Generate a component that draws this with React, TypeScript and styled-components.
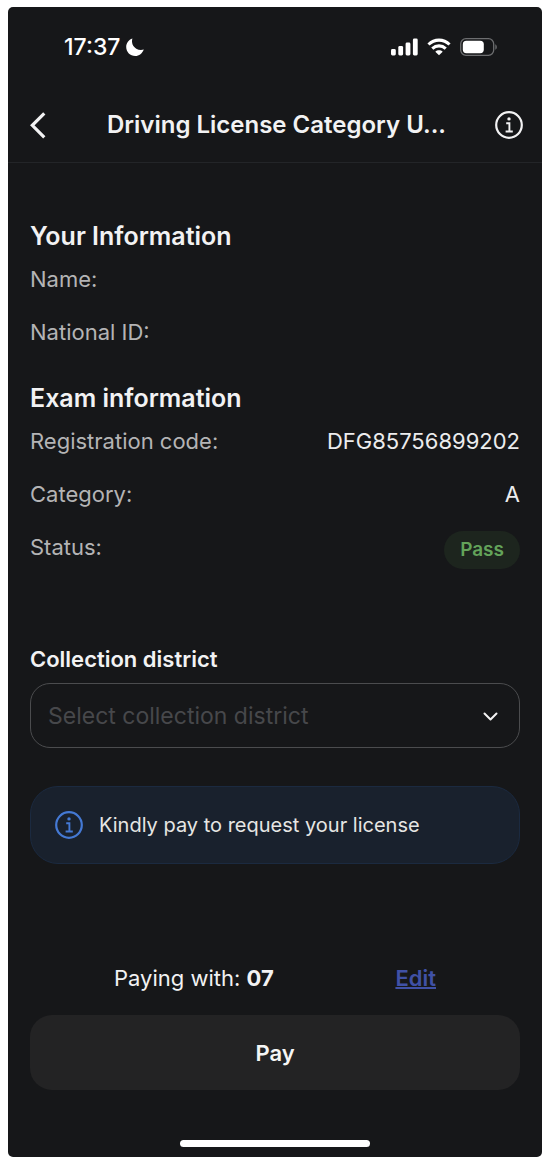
import React from 'react';
import styled, { createGlobalStyle } from 'styled-components';

const GlobalStyle = createGlobalStyle`
  *, *::before, *::after { box-sizing: border-box; }
  body {
    margin: 0;
    background: #ffffff;
    font-family: Inter, 'Liberation Sans', sans-serif;
    -webkit-font-smoothing: antialiased;
  }
  h1, h2, p, dl, dt, dd { margin: 0; }
`;

const Frame = styled.div`
  min-height: 100vh;
  padding: 7px 6px 7px 8px;
  display: flex;
`;

const Screen = styled.div`
  flex: 1;
  min-width: 0;
  display: flex;
  flex-direction: column;
  background: #161719;
  color: #f2f2f3;
  border-radius: 5px;
  overflow: hidden;
`;

const StatusBar = styled.div`
  display: flex;
  align-items: center;
  justify-content: space-between;
  height: 80px;
  padding: 0 44px 0 56px;
`;

const Clock = styled.div`
  display: flex;
  align-items: center;
  gap: 6px;
  font-size: 23px;
  font-weight: 500;
  color: #ffffff;
`;

const Indicators = styled.div`
  display: flex;
  align-items: center;
  gap: 9px;
`;

const Header = styled.header`
  display: flex;
  align-items: center;
  justify-content: space-between;
  height: 76px;
  padding: 0 19px 0 22px;
  border-bottom: 1px solid #232528;
`;

const Title = styled.h1`
  font-size: 24px;
  line-height: 32px;
  font-weight: 600;
  white-space: nowrap;
`;

const IconButton = styled.button`
  display: flex;
  width: 28px;
  padding: 0;
  border: 0;
  background: none;
  color: #f2f2f3;
  cursor: pointer;
`;

const Content = styled.main`
  flex: 1;
  display: flex;
  flex-direction: column;
  padding: 58px 22px 24px;
`;

const Section = styled.section`
  & + & { margin-top: 24px; }
`;

const SectionTitle = styled.h2`
  margin-bottom: 2px;
  font-size: 25px;
  line-height: 30px;
  font-weight: 600;
`;

const Row = styled.div`
  display: flex;
  justify-content: space-between;
  align-items: flex-start;
  min-height: 53px;
  padding-top: 10px;
  font-size: 22px;
  line-height: 32px;
`;

const Term = styled.dt`
  color: #b4b4b5;
`;

const Value = styled.dd`
  color: #ececed;
`;

const Badge = styled.span`
  display: block;
  padding: 0 16px;
  border-radius: 19px;
  background: #1d251e;
  color: #63a35a;
  font-size: 19px;
  line-height: 38px;
  font-weight: 600;
`;

const Field = styled.div`
  display: flex;
  flex-direction: column;
  gap: 12px;
  margin-top: 73px;
`;

const FieldLabel = styled.label`
  font-size: 22px;
  line-height: 24px;
  font-weight: 600;
`;

const SelectBox = styled.div`
  position: relative;
  display: flex;
`;

const Select = styled.select`
  flex: 1;
  min-width: 0;
  height: 65px;
  padding: 0 56px 0 17px;
  appearance: none;
  border: 1px solid #4b4c4e;
  border-radius: 20px;
  background: transparent;
  color: #47484b;
  font-family: inherit;
  font-size: 23px;
`;

const SelectArrow = styled.svg`
  position: absolute;
  right: 22px;
  top: 29px;
  pointer-events: none;
`;

const Notice = styled.div`
  display: flex;
  align-items: center;
  gap: 16px;
  height: 78px;
  margin-top: 38px;
  padding: 0 24px;
  border: 1px solid #1b2a40;
  border-radius: 28px;
  background: #19212d;
  color: #e6e6e4;
  font-size: 20px;
  line-height: 24px;
`;

const NoticeIcon = styled.span`
  display: flex;
  color: #4479d4;
`;

const Footer = styled.footer`
  display: flex;
  flex-direction: column;
  padding: 0 22px 50px;
`;

const Payer = styled.div`
  display: flex;
  justify-content: space-between;
  padding: 0 84px;
  margin-bottom: 25px;
  font-size: 22px;
  line-height: 24px;
`;

const EditLink = styled.a`
  color: #4051a6;
  font-weight: 600;
  text-decoration: underline;
  text-decoration-thickness: 2px;
`;

const PayButton = styled.button`
  height: 75px;
  border: 0;
  border-radius: 22px;
  background: #232324;
  color: #f5f5f5;
  font-family: inherit;
  font-size: 22px;
  font-weight: 600;
  cursor: pointer;
`;

const HomeIndicator = styled.div`
  align-self: center;
  width: 190px;
  height: 7px;
  margin-bottom: 10px;
  border-radius: 4px;
  background: #ffffff;
`;

const InfoIcon = () => (
  <svg width="28" height="28" viewBox="0 0 28 28" fill="none" stroke="currentColor" strokeWidth="2.2" aria-hidden="true">
    <circle cx="14" cy="14" r="12.8" />
    <path d="M11.2 12.3h3.2v7.9M10.6 20.5h7.2" strokeWidth="1.9" />
    <circle cx="14" cy="7.9" r="1.7" fill="currentColor" stroke="none" />
  </svg>
);

const MoonIcon = () => (
  <svg width="18" height="18" viewBox="0 0 18 18" fill="#fff" aria-hidden="true">
    <path d="M6.4 0.5C5.2 4.600 6.900 8.700 10.300 10.700C12.600 12 15.300 12.200 17.800 11.500C16.500 15.300 13.100 18 9.200 18C4.200 18 0.200 14 0.200 9C0.200 5.100 2.700 1.800 6.400 0.500Z" />
  </svg>
);

const SignalIcon = () => (
  <svg width="27" height="18" viewBox="0 0 27 18" fill="#fff" aria-hidden="true">
    <rect x="0" y="11" width="4.800" height="6.500" rx="1.400" />
    <rect x="7.300" y="8" width="4.800" height="9.500" rx="1.400" />
    <rect x="14.600" y="4.500" width="4.800" height="13" rx="1.400" />
    <rect x="21.900" y="0.500" width="4.800" height="17" rx="1.400" />
  </svg>
);

const WifiIcon = () => (
  <svg width="24" height="18" viewBox="0 0 24 18" fill="none" stroke="#fff" strokeWidth="3.100" aria-hidden="true">
    <path d="M1.500 6.500C7.400 0.700 16.600 0.700 22.500 6.500" />
    <path d="M5.300 10.600C9.100 7 14.900 7 18.700 10.600" />
    <path d="M12 17.200L8.300 13.700C10.400 11.800 13.600 11.800 15.700 13.700Z" fill="#fff" stroke="none" />
  </svg>
);

const BatteryIcon = () => (
  <svg width="38" height="18" viewBox="0 0 38 18" fill="none" aria-hidden="true">
    <rect x="0.700" y="0.700" width="33" height="16.600" rx="5.200" stroke="#6d6e70" strokeWidth="1.300" />
    <rect x="2.800" y="2.800" width="21" height="12.400" rx="3.600" fill="#fff" />
    <path d="M35.300 6.200C37.300 7.200 37.300 10.800 35.300 11.800Z" fill="#6d6e70" />
  </svg>
);

const personalRows = [{ term: 'Name:' }, { term: 'National ID:' }];

const examRows: { term: string; value: React.ReactNode }[] = [
  { term: 'Registration code:', value: 'DFG85756899202' },
  { term: 'Category:', value: 'A' },
  { term: 'Status:', value: <Badge>Pass</Badge> },
];

export default function App() {
  return (
    <>
      <GlobalStyle />
      <Frame>
        <Screen>
          <StatusBar>
            <Clock>
              17:37
              <MoonIcon />
            </Clock>
            <Indicators>
              <SignalIcon />
              <WifiIcon />
              <BatteryIcon />
            </Indicators>
          </StatusBar>
          <Header>
            <IconButton type="button" aria-label="Back">
              <svg width="16" height="28" viewBox="0 0 16 28" fill="none" stroke="currentColor" strokeWidth="3.2" aria-hidden="true">
                <path d="M14.300 2.300L2.300 14.300L14.300 26.300" />
              </svg>
            </IconButton>
            <Title>Driving License Category U...</Title>
            <IconButton type="button" aria-label="Information">
              <InfoIcon />
            </IconButton>
          </Header>
          <Content>
            <Section>
              <SectionTitle>Your Information</SectionTitle>
              <dl>
                {personalRows.map((row) => (
                  <Row key={row.term}>
                    <Term>{row.term}</Term>
                  </Row>
                ))}
              </dl>
            </Section>
            <Section>
              <SectionTitle>Exam information</SectionTitle>
              <dl>
                {examRows.map((row) => (
                  <Row key={row.term}>
                    <Term>{row.term}</Term>
                    <Value>{row.value}</Value>
                  </Row>
                ))}
              </dl>
            </Section>
            <Field>
              <FieldLabel htmlFor="district">Collection district</FieldLabel>
              <SelectBox>
                <Select id="district" defaultValue="">
                  <option value="">Select collection district</option>
                </Select>
                <SelectArrow width="15" height="9" viewBox="0 0 15 9" fill="none" stroke="#f2f2f3" strokeWidth="2" strokeLinecap="round" strokeLinejoin="round" aria-hidden="true">
                  <path d="M1.500 1.500L7.500 7.500L13.500 1.500" />
                </SelectArrow>
              </SelectBox>
            </Field>
            <Notice>
              <NoticeIcon>
                <InfoIcon />
              </NoticeIcon>
              <p>Kindly pay to request your license</p>
            </Notice>
          </Content>
          <Footer>
            <Payer>
              <p>
                Paying with: <strong>07</strong>
              </p>
              <EditLink href="#edit">Edit</EditLink>
            </Payer>
            <PayButton type="button">Pay</PayButton>
          </Footer>
          <HomeIndicator />
        </Screen>
      </Frame>
    </>
  );
}
